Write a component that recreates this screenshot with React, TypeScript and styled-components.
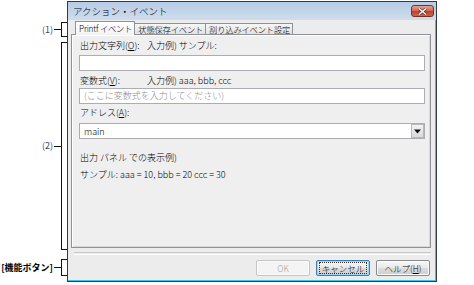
import React from "react";
import styled, { createGlobalStyle } from "styled-components";

const GlobalStyle = createGlobalStyle`
  body {
    margin: 0;
    background: #ffffff;
    font-family: "Noto Sans CJK JP", "Noto Sans", sans-serif;
    font-weight: 300;
  }
`;

const Page = styled.div`
  display: flex;
  width: 474px;
  height: 285px;
  padding-top: 1px;
  box-sizing: border-box;
`;

const Callouts = styled.div`
  display: flex;
  flex-direction: column;
  width: 67px;
  padding-top: 20px;
`;

const Callout = styled.div<{ $top: number; $height: number }>`
  display: flex;
  align-items: center;
  margin-top: ${(p) => p.$top}px;
  height: ${(p) => p.$height}px;
`;

const CalloutLabel = styled.span<{ $bold?: boolean }>`
  flex: 1;
  text-align: right;
  font-size: 9px;
  line-height: 12px;
  color: ${(p) => (p.$bold ? "#000" : "#3c4470")};
  font-weight: ${(p) => (p.$bold ? 700 : 400)};
  white-space: nowrap;
  padding-right: 1px;
`;

const Connector = styled.span`
  width: 7px;
  height: 1px;
  background: #111;
`;

const Bracket = styled.span`
  align-self: stretch;
  width: 5px;
  border: 1px solid #111;
  border-right: none;
`;

const Window = styled.div`
  width: 370px;
  height: 281px;
  box-sizing: border-box;
  border: 1px solid #2e3b48;
  box-shadow: inset -1px -1px 0 #3cc3ea;
  background: #ececec;
  display: flex;
  flex-direction: column;
`;

const TitleBar = styled.div`
  height: 18px;
  display: flex;
  align-items: center;
  justify-content: space-between;
  padding: 0 2px 0 5px;
  background: linear-gradient(to bottom, #b6cbe5, #cfdded);
  font-size: 9.5px;
  color: #000;
`;

const CloseButton = styled.div`
  width: 23px;
  height: 12px;
  box-sizing: border-box;
  border: 1px solid #7d2f24;
  border-radius: 3px;
  background: linear-gradient(to bottom, #e6a493, #cf6450 50%, #b8402e 51%, #c96550);
  display: flex;
  align-items: center;
  justify-content: center;
`;

const Body = styled.div`
  flex: 1;
  display: flex;
  flex-direction: column;
  padding: 1px 5px 0 3px;
`;

const TabStrip = styled.div`
  display: flex;
  align-items: flex-end;
  height: 14px;
  padding-left: 4px;
  margin-bottom: -1px;
  position: relative;
  z-index: 1;
`;

const Tab = styled.div<{ $active?: boolean }>`
  height: ${(p) => (p.$active ? 14 : 12)}px;
  box-sizing: border-box;
  padding: 0 2px 0 3px;
  margin-right: -1px;
  border: 1px solid #8e9296;
  border-bottom: ${(p) => (p.$active ? "none" : "1px solid #8e9296")};
  background: ${(p) =>
    p.$active
      ? "linear-gradient(to bottom, #ffffff, #f3f3f3)"
      : "linear-gradient(to bottom, #f6f6f6, #e2e2e2)"};
  font-size: 8.3px;
  line-height: ${(p) => (p.$active ? 13 : 11)}px;
  letter-spacing: -0.2px;
  color: #000;
  white-space: nowrap;
`;

const Panel = styled.div`
  height: 214px;
  box-sizing: border-box;
  border: 1px solid #8e9296;
  box-shadow: inset 1px 1px 0 #ffffff, inset -1px -1px 0 #d8d8d8;
  background: #efefef;
  display: flex;
  flex-direction: column;
  padding: 0 5px 0 7px;
`;

const LabelRow = styled.div<{ $gap: number }>`
  display: flex;
  margin-top: ${(p) => p.$gap}px;
  margin-left: 1px;
  height: 12px;
  font-size: 9px;
  line-height: 12px;
  color: #000;
  white-space: nowrap;
`;

const LabelName = styled.span`
  width: 67px;
`;

const TextBox = styled.div<{ $gap: number; $placeholder?: boolean }>`
  margin-top: ${(p) => p.$gap}px;
  height: 16px;
  box-sizing: border-box;
  border: 1px solid #abadb3;
  background: #ffffff;
  padding-left: 4px;
  font-size: 9px;
  line-height: 14px;
  color: ${(p) => (p.$placeholder ? "#8c8c8c" : "#000")};
`;

const Combo = styled.div<{ $gap: number }>`
  margin-top: ${(p) => p.$gap}px;
  height: 16px;
  box-sizing: border-box;
  border: 1px solid #abadb3;
  background: #ffffff;
  display: flex;
  align-items: center;
  justify-content: space-between;
  padding-left: 4px;
  font-size: 9px;
  color: #000;
`;

const ComboArrow = styled.div`
  width: 13px;
  height: 14px;
  box-sizing: border-box;
  border: 1px solid #b9b9b9;
  background: linear-gradient(to bottom, #f4f4f4, #d9d9d9);
  display: flex;
  align-items: center;
  justify-content: center;
`;

const Separator = styled.div`
  margin: 4px 0 0 3px;
  height: 1px;
  border-top: 1px solid #c9c9c9;
  border-bottom: 1px solid #ffffff;
`;

const ButtonRow = styled.div`
  display: flex;
  justify-content: flex-end;
  gap: 6px;
  margin-top: 5px;
  padding-right: 1px;
`;

const Button = styled.div<{ $state?: "disabled" | "focus" }>`
  width: 54px;
  height: 16px;
  box-sizing: border-box;
  border: 1px solid
    ${(p) =>
      p.$state === "disabled" ? "#c6c6c6" : p.$state === "focus" ? "#3c7fb1" : "#8a8a8a"};
  border-radius: 2px;
  background: ${(p) =>
    p.$state === "disabled"
      ? "#f4f4f4"
      : "linear-gradient(to bottom, #f7f7f7, #e9e9e9 50%, #dcdcdc 51%, #cfcfcf)"};
  box-shadow: ${(p) =>
    p.$state === "focus" ? "inset 0 0 0 1px #9ed5f2" : "inset 0 0 0 1px #fbfbfb"};
  display: flex;
  align-items: center;
  justify-content: center;
  font-size: 8.5px;
  color: ${(p) => (p.$state === "disabled" ? "#a3a3a3" : "#000")};
`;

const FocusRing = styled.span`
  padding: 0 2px;
  outline: 1px dotted #333;
  line-height: 10px;
`;

export default function App() {
  return (
    <>
      <GlobalStyle />
      <Page>
        <Callouts>
          <Callout $top={1} $height={15}>
            <CalloutLabel>(1)</CalloutLabel>
            <Connector />
            <Bracket />
          </Callout>
          <Callout $top={5} $height={208}>
            <CalloutLabel>(2)</CalloutLabel>
            <Connector />
            <Bracket />
          </Callout>
          <Callout $top={9} $height={17}>
            <CalloutLabel $bold>[機能ボタン]</CalloutLabel>
            <Connector />
            <Bracket />
          </Callout>
        </Callouts>
        <Window>
          <TitleBar>
            <span>アクション・イベント</span>
            <CloseButton>
              <svg width="9" height="7" viewBox="0 0 9 7">
                <path d="M1 0.5 L8 6.5 M8 0.5 L1 6.5" stroke="#5a1a12" strokeWidth="2.6" />
                <path d="M1 0.5 L8 6.5 M8 0.5 L1 6.5" stroke="#ffffff" strokeWidth="1.5" />
              </svg>
            </CloseButton>
          </TitleBar>
          <Body>
            <TabStrip>
              <Tab $active>Printf イベント</Tab>
              <Tab>状態保存イベント</Tab>
              <Tab>割り込みイベント設定</Tab>
            </TabStrip>
            <Panel>
              <LabelRow $gap={5}>
                <LabelName>出力文字列(<u>O</u>):</LabelName>
                <span>入力例) サンプル:</span>
              </LabelRow>
              <TextBox $gap={3} />
              <LabelRow $gap={4}>
                <LabelName>変数式(<u>V</u>):</LabelName>
                <span>入力例) aaa, bbb, ccc</span>
              </LabelRow>
              <TextBox $gap={1} $placeholder>
                (ここに変数式を入力してください)
              </TextBox>
              <LabelRow $gap={3}>
                <span>アドレス(<u>A</u>):</span>
              </LabelRow>
              <Combo $gap={4}>
                <span>main</span>
                <ComboArrow>
                  <svg width="7" height="5" viewBox="0 0 7 5">
                    <path d="M0 0.5 H7 L3.5 4.5 Z" fill="#111" />
                  </svg>
                </ComboArrow>
              </Combo>
              <LabelRow $gap={13}>
                <span>出力 パネル での表示例)</span>
              </LabelRow>
              <LabelRow $gap={5}>
                <span>サンプル: aaa = 10, bbb = 20 ccc = 30</span>
              </LabelRow>
            </Panel>
            <Separator />
            <ButtonRow>
              <Button $state="disabled">OK</Button>
              <Button $state="focus">
                <FocusRing>キャンセル</FocusRing>
              </Button>
              <Button>
                ヘルプ(<u>H</u>)
              </Button>
            </ButtonRow>
          </Body>
        </Window>
      </Page>
    </>
  );
}
